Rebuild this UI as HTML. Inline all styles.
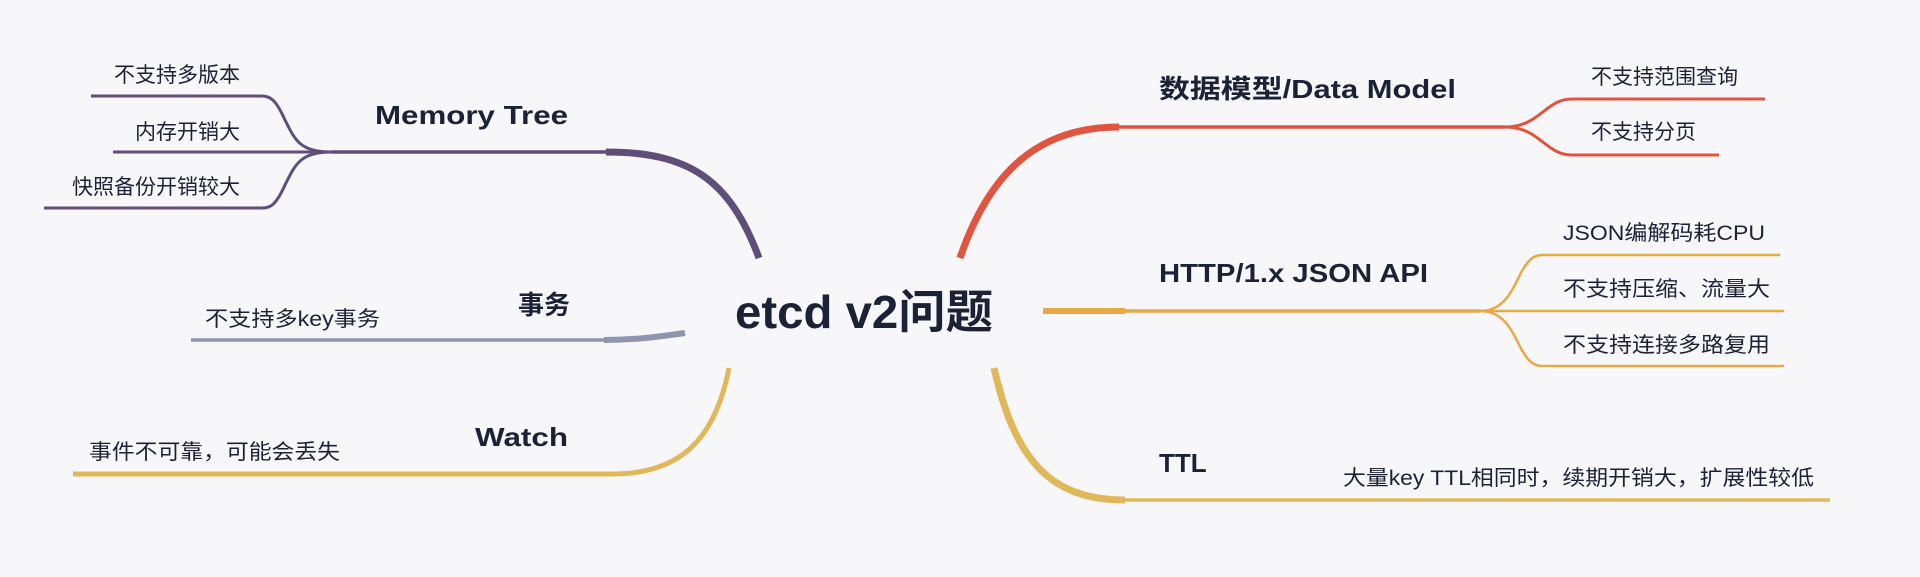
<!DOCTYPE html>
<html><head><meta charset="utf-8"><style>
html,body{margin:0;padding:0;background:#f7f7f9;}
svg{display:block}
text{font-family:"Liberation Sans","Noto Sans CJK SC",sans-serif;fill:#1b2236;}
.b{font-weight:bold;font-size:26px}
.s{font-size:21px}
</style></head><body>
<svg width="1920" height="577" viewBox="0 0 1920 577" xmlns="http://www.w3.org/2000/svg">
<rect width="1920" height="577" fill="#f7f7f9"/>
<g fill="none" stroke-linecap="butt">
<path d="M759 258 C730 180 690 152 606 152" stroke="#5f4e7a" stroke-width="7"/>
<path d="M608 152 L331 152" stroke="#5f4e7a" stroke-width="3.5"/>
<path d="M331 152 C300 152 295 140 285 120 C275 98 270 96 260 96 L91 96" stroke="#5f4e7a" stroke-width="3"/>
<path d="M331 152 L113 152" stroke="#5f4e7a" stroke-width="3"/>
<path d="M331 152 C300 152 295 165 285 185 C275 207 270 208 260 208 L44 208" stroke="#5f4e7a" stroke-width="3"/>
<path d="M685 333 C650 338 630 340 604 340" stroke="#8e96ae" stroke-width="6"/>
<path d="M606 340 L191 340" stroke="#8e96ae" stroke-width="3.5"/>
<path d="M729 368 C715 440 680 474 612 474 L73 474" stroke="#e0b85a" stroke-width="5"/>
<path d="M960 258 C990 170 1040 127 1119 127" stroke="#e0553f" stroke-width="7"/>
<path d="M1117 127 L1505 127" stroke="#e0553f" stroke-width="3.5"/>
<path d="M1505 127 C1540 127 1545 99 1572 99 L1765 99" stroke="#e0553f" stroke-width="3"/>
<path d="M1505 127 C1540 127 1545 155 1572 155 L1719 155" stroke="#e0553f" stroke-width="3"/>
<path d="M1043 311 L1480 311" stroke="#e6a946" stroke-width="3.5"/>
<path d="M1043 311 L1125 311" stroke="#e6a946" stroke-width="6"/>
<path d="M1480 311 C1520 311 1515 255 1542 255 L1780 255" stroke="#e6a946" stroke-width="2.5"/>
<path d="M1480 311 L1784 311" stroke="#e6a946" stroke-width="2.5"/>
<path d="M1480 311 C1520 311 1515 366 1542 366 L1784 366" stroke="#e6a946" stroke-width="2.5"/>
<path d="M994 368 C1015 460 1050 500 1125 500" stroke="#e0b85a" stroke-width="7"/>
<path d="M1123 500 L1830 500" stroke="#e0b85a" stroke-width="3.5"/>
</g>
<text x="735" y="328" style="font-weight:bold;font-size:46px" textLength="258" lengthAdjust="spacingAndGlyphs">etcd v2问题</text>
<text x="375" y="124" class="b" textLength="193" lengthAdjust="spacingAndGlyphs">Memory Tree</text>
<text x="570" y="314" class="b" text-anchor="end">事务</text>
<text x="475" y="446" class="b" textLength="93" lengthAdjust="spacingAndGlyphs">Watch</text>
<text x="1159" y="98" class="b" textLength="297" lengthAdjust="spacingAndGlyphs">数据模型/Data Model</text>
<text x="1159" y="282" class="b" textLength="269" lengthAdjust="spacingAndGlyphs">HTTP/1.x JSON API</text>
<text x="1159" y="472" class="b">TTL</text>
<text x="240" y="82" class="s" text-anchor="end">不支持多版本</text>
<text x="240" y="139" class="s" text-anchor="end">内存开销大</text>
<text x="240" y="194" class="s" text-anchor="end">快照备份开销较大</text>
<text x="205" y="326" class="s" textLength="175" lengthAdjust="spacingAndGlyphs">不支持多key事务</text>
<text x="89" y="459" class="s" textLength="251" lengthAdjust="spacingAndGlyphs">事件不可靠，可能会丢失</text>
<text x="1591" y="84" class="s">不支持范围查询</text>
<text x="1591" y="139" class="s">不支持分页</text>
<text x="1563" y="240" class="s" textLength="202" lengthAdjust="spacingAndGlyphs">JSON编解码耗CPU</text>
<text x="1563" y="296" class="s" textLength="207" lengthAdjust="spacingAndGlyphs">不支持压缩、流量大</text>
<text x="1563" y="352" class="s" textLength="207" lengthAdjust="spacingAndGlyphs">不支持连接多路复用</text>
<text x="1343" y="485" class="s" textLength="471" lengthAdjust="spacingAndGlyphs">大量key TTL相同时，续期开销大，扩展性较低</text>
</svg>
</body></html>
